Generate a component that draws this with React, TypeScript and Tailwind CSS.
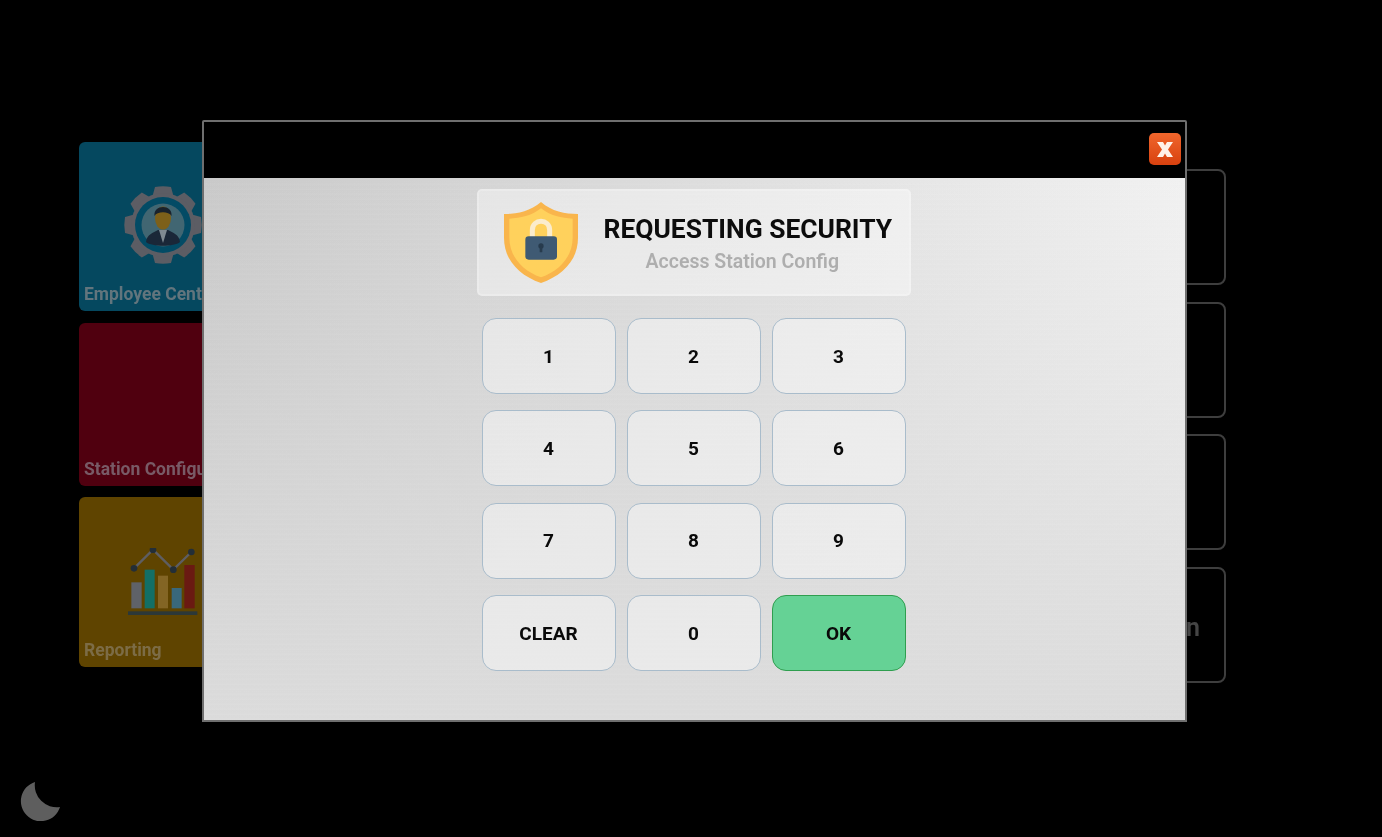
import React from "react";

function GearPerson() {
  const teeth = [0, 45, 90, 135, 180, 225, 270, 315];
  return (
    <svg width="80" height="80" viewBox="-40 -40 80 80">
      {teeth.map((a) => (
        <path key={a} d="M-11 -27 L-8 -38 Q0 -39.5 8 -38 L11 -27Z" fill="#5c5d64" transform={`rotate(${a})`} />
      ))}
      <circle r="32" fill="#5c5d64" />
      <circle r="28" fill="#034b65" />
      <circle r="21.5" fill="#416672" />
      <path d="M-17 17 C-16 9 -10 8 -5 5 L5 5 C10 8 16 9 17 17 C11 22 -11 22 -17 17Z" fill="#1a2738" />
      <path d="M-4 5 L0 18 L4 5Z" fill="#7f8a92" />
      <ellipse cx="0" cy="-7" rx="8" ry="11.5" fill="#7d6019" />
      <path d="M-8.5 -9 C-10 -21 10 -21 8.5 -9 C6 -14 -6 -14 -8.5 -9Z" fill="#19222c" />
    </svg>
  );
}

function ChartIcon() {
  return (
    <svg width="70" height="70" viewBox="172 205 210 210">
      <rect x="182" y="308" width="31" height="78" fill="#5f6268" />
      <rect x="222" y="270" width="30" height="116" fill="#136f66" />
      <rect x="262" y="288" width="30" height="98" fill="#836524" />
      <rect x="303" y="325" width="30" height="61" fill="#39687c" />
      <rect x="341" y="256" width="31" height="130" fill="#6a1a12" />
      <rect x="172" y="395" width="208" height="11" fill="#2c3838" />
      <polyline points="190,266 247,210 308,270 362,217" fill="none" stroke="#5e5e62" strokeWidth="7" />
      <circle cx="190" cy="266" r="10" fill="#232e37" />
      <circle cx="247" cy="210" r="10" fill="#232e37" />
      <circle cx="308" cy="270" r="10" fill="#232e37" />
      <circle cx="362" cy="217" r="10" fill="#232e37" />
    </svg>
  );
}

function Shield() {
  return (
    <svg width="74" height="81" viewBox="103 65 222 243">
      <path d="M214 65 C182 93 142 101 103 101 L103 172 C103 240 150 286 214 308 C278 286 325 240 325 172 L325 101 C286 101 246 93 214 65Z" fill="#f9b54c" />
      <path d="M214 84 C186 106 152 114 119 115 L119 172 C119 230 160 272 214 291 C268 272 309 230 309 172 L309 115 C276 114 242 106 214 84Z" fill="#ffd15c" />
      <path d="M188 172 L188 150 C188 114 240 114 240 150 L240 172" fill="none" stroke="#fbeccc" strokeWidth="15" />
      <rect x="167" y="168" width="95" height="70" rx="10" fill="#3f5a73" />
      <circle cx="214" cy="197" r="8" fill="#273b4d" />
      <rect x="210" y="197" width="8" height="19" rx="2" fill="#273b4d" />
    </svg>
  );
}

function Moon() {
  return (
    <svg width="40" height="40" viewBox="0 0 40 40">
      <path d="M15 1 A20 20 0 1 0 40 26 A22 22 0 0 1 15 1Z" fill="#5e5e5e" />
    </svg>
  );
}

function CloseIcon() {
  return (
    <svg width="16" height="15" viewBox="0 0 16 15">
      <path d="M0 0 H6 L8 3.5 L10 0 H16 L11 7.5 L16 15 H10 L8 11.5 L6 15 H0 L5 7.5Z" fill="#fff3ea" />
    </svg>
  );
}

function Tile({ h, bg, label, color, children }: { h: string; bg: string; label: string; color: string; children?: React.ReactNode }) {
  return (
    <div className={`flex w-[168px] flex-col overflow-hidden rounded-[6px] pb-[7px] pl-[5px] ${h} ${bg}`}>
      <div className="flex flex-1 items-center justify-center pr-[5px]">{children}</div>
      <div className={`text-[17.5px] font-bold leading-[20px] whitespace-nowrap ${color}`}>{label}</div>
    </div>
  );
}

function OutlineBox({ label }: { label?: string }) {
  return (
    <div className="flex h-[116px] w-[260px] items-center justify-end rounded-[8px] border-2 border-[#3e3e3e] pr-[24px] pt-[6px] text-[25px] font-semibold whitespace-nowrap text-[#454545]">
      {label}
    </div>
  );
}

function Key({ label, ok }: { label: string; ok?: boolean }) {
  return (
    <button
      className={
        ok
          ? "flex h-[76px] items-center justify-center rounded-[14px] border border-[#2f9e4f] bg-[#65d295] pt-[2px] text-[19px] font-bold text-[#0a0a0a]"
          : "flex h-[76px] items-center justify-center rounded-[14px] border border-[#a9bccb] bg-white/40 pt-[2px] text-[19px] font-bold text-[#0a0a0a]"
      }
    >
      {label}
    </button>
  );
}

export default function App() {
  const keys = ["1", "2", "3", "4", "5", "6", "7", "8", "9", "CLEAR", "0"];
  return (
    <div className="relative h-[837px] w-full overflow-hidden bg-black font-['Roboto','Liberation_Sans',sans-serif] blur-[0.5px]">
      <div className="flex items-start justify-between pl-[79px] pr-[156px]">
        <div className="flex flex-col gap-[11.5px] pt-[142px]">
          <Tile h="h-[169px]" bg="bg-[#05485f]" label="Employee Center" color="text-[#62757d]">
            <div className="pt-[23px]"><GearPerson /></div>
          </Tile>
          <Tile h="h-[163px]" bg="bg-[#50000f]" label="Station Configuration" color="text-[#785a66]" />
          <Tile h="h-[170px]" bg="bg-[#5f4400]" label="Reporting" color="text-[#7c6c46]">
            <div className="pt-[29px]"><ChartIcon /></div>
          </Tile>
        </div>
        <div className="flex flex-col gap-[16.67px] pt-[169px]">
          <OutlineBox />
          <OutlineBox />
          <OutlineBox />
          <OutlineBox label="Administration" />
        </div>
      </div>

      <div className="absolute bottom-[16px] left-[20px] flex">
        <Moon />
      </div>

      <div className="absolute left-[202px] top-[120px] flex h-[602px] w-[985px] flex-col rounded-t-[2px] border-2 border-[#6f6f6f] bg-black">
        <div className="flex h-[56px] shrink-0 items-start justify-end pr-[4px] pt-[11px]">
          <button className="flex h-[32px] w-[32px] items-center justify-center rounded-[5px] bg-[linear-gradient(180deg,#f0662c,#d8410f)]">
            <CloseIcon />
          </button>
        </div>
        <div className="flex flex-1 flex-col items-center bg-[repeating-linear-gradient(0deg,rgba(255,255,255,0.025)_0px,rgba(255,255,255,0.025)_1px,rgba(0,0,0,0.004)_2px,rgba(0,0,0,0.004)_5px),linear-gradient(180deg,rgba(220,220,220,0)_0%,#dcdcdc_100%),linear-gradient(90deg,#cacaca_0%,#f2f2f2_100%)] pr-[2px] pt-[11px]">
          <div className="flex h-[107px] w-[434px] items-center rounded-[5px] border-2 border-white/20 bg-white/40 pl-[25px]">
            <Shield />
            <div className="ml-[26px] flex flex-col items-center pt-[3px]">
              <div className="text-[26.4px] font-bold leading-[30px] whitespace-nowrap text-[#0c0c0c]">REQUESTING SECURITY</div>
              <div className="mr-[11px] mt-[5px] text-[19.5px] font-semibold leading-[26px] whitespace-nowrap text-[#aeaeae]">Access Station Config</div>
            </div>
          </div>
          <div className="mt-[22px] grid w-[424px] grid-cols-3 gap-x-[11px] gap-y-[16.3px]">
            {keys.map((k) => (
              <Key key={k} label={k} />
            ))}
            <Key label="OK" ok />
          </div>
        </div>
      </div>
    </div>
  );
}
